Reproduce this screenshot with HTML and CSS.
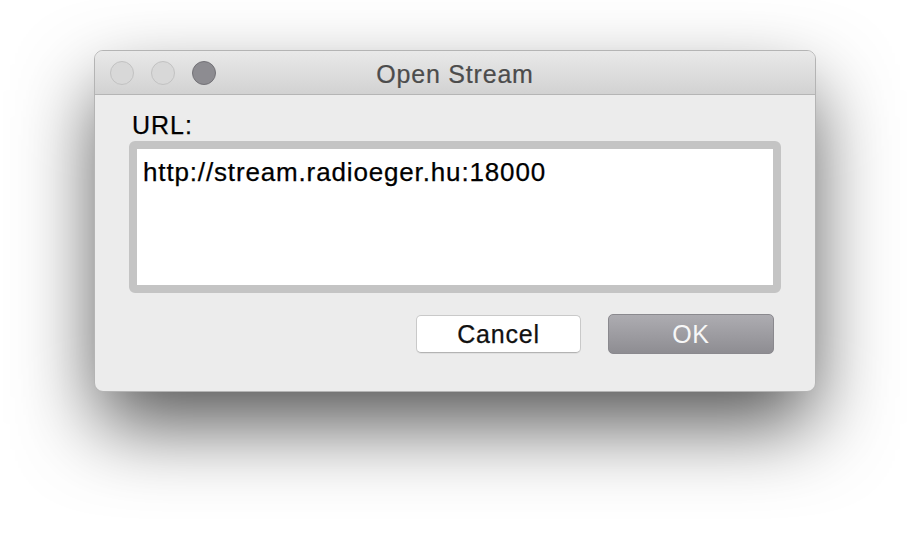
FILE: index.html
```html
<!DOCTYPE html>
<html>
<head>
<meta charset="utf-8">
<link rel="stylesheet" href="styles.css">
</head>
<body>
<div class="desktop">
  <div class="window">
    <div class="titlebar">
      <div class="lights">
        <span class="light"></span>
        <span class="light"></span>
        <span class="light dark"></span>
      </div>
      <div class="title">Open Stream</div>
    </div>
    <div class="content">
      <div class="label">URL:</div>
      <div class="field">http://stream.radioeger.hu:18000</div>
      <div class="buttons">
        <button class="btn cancel">Cancel</button>
        <button class="btn ok">OK</button>
      </div>
    </div>
  </div>
</div>
</body>
</html>
```
FILE: styles.css
```css
html, body {
  margin: 0;
  padding: 0;
  background: #ffffff;
}
.desktop {
  padding: 50px 0 0 94px;
  height: 540px;
  box-sizing: border-box;
  font-family: "Liberation Sans", Arial, sans-serif;
}
.window {
  width: 722px;
  height: 342px;
  box-sizing: border-box;
  border: 1px solid #b4b4b4;
  border-radius: 9px;
  background: #ececec;
  overflow: hidden;
  display: flex;
  flex-direction: column;
  box-shadow: 0 36px 80px -4px rgba(0, 0, 0, 0.68);
}
.titlebar {
  height: 44px;
  box-sizing: border-box;
  background: linear-gradient(#e9e9e9, #d2d2d2);
  border-bottom: 1px solid #b5b5b5;
  display: flex;
  align-items: center;
  position: relative;
}
.lights {
  display: flex;
  gap: 17px;
  padding-left: 15px;
}
.light {
  width: 22px;
  height: 22px;
  border-radius: 50%;
  background: #d8d8d8;
  border: 1px solid #c2c2c2;
}
.light.dark {
  background: #8d8c91;
  border-color: #737277;
}
.title {
  position: absolute;
  left: 0;
  right: 0;
  top: 8px;
  text-align: center;
  font-size: 25px;
  letter-spacing: 0.8px;
  color: #4c4c4c;
  line-height: 30px;
  -webkit-text-stroke: 0.2px #4c4c4c;
}
.content {
  flex: 1;
  padding: 15px 34px 0 34px;
  display: flex;
  flex-direction: column;
}
.label {
  font-size: 25px;
  line-height: 30px;
  letter-spacing: 1px;
  padding-left: 3px;
  color: #000;
  margin-bottom: 1px;
  -webkit-text-stroke: 0.25px #000;
}
.field {
  width: 652px;
  height: 152px;
  box-sizing: border-box;
  border: 8px solid #c4c4c4;
  border-radius: 6px;
  background: #ffffff;
  padding: 8px 6px;
  font-size: 26px;
  line-height: 30px;
  letter-spacing: 0.85px;
  color: #000;
  -webkit-text-stroke: 0.25px #000;
}
.buttons {
  display: flex;
  justify-content: flex-end;
  align-items: flex-start;
  gap: 27px;
  margin-top: 21px;
  padding-right: 7px;
}
.btn {
  font-family: "Liberation Sans", Arial, sans-serif;
  font-size: 25px;
  letter-spacing: 0.8px;
  box-sizing: border-box;
  border-radius: 5px;
  padding: 0;
  line-height: 30px;
}
.cancel {
  width: 165px;
  height: 38px;
  margin-top: 1px;
  background: #ffffff;
  border: 1px solid #c9c9c9;
  border-bottom-color: #b3b3b3;
  color: #111;
  box-shadow: 0 1px 0 rgba(0,0,0,0.05);
  -webkit-text-stroke: 0.25px #111;
}
.ok {
  width: 166px;
  height: 40px;
  background: linear-gradient(#adacb1, #8e8d92);
  border: 1px solid #8a898e;
  color: #f7f7f7;
}
```
